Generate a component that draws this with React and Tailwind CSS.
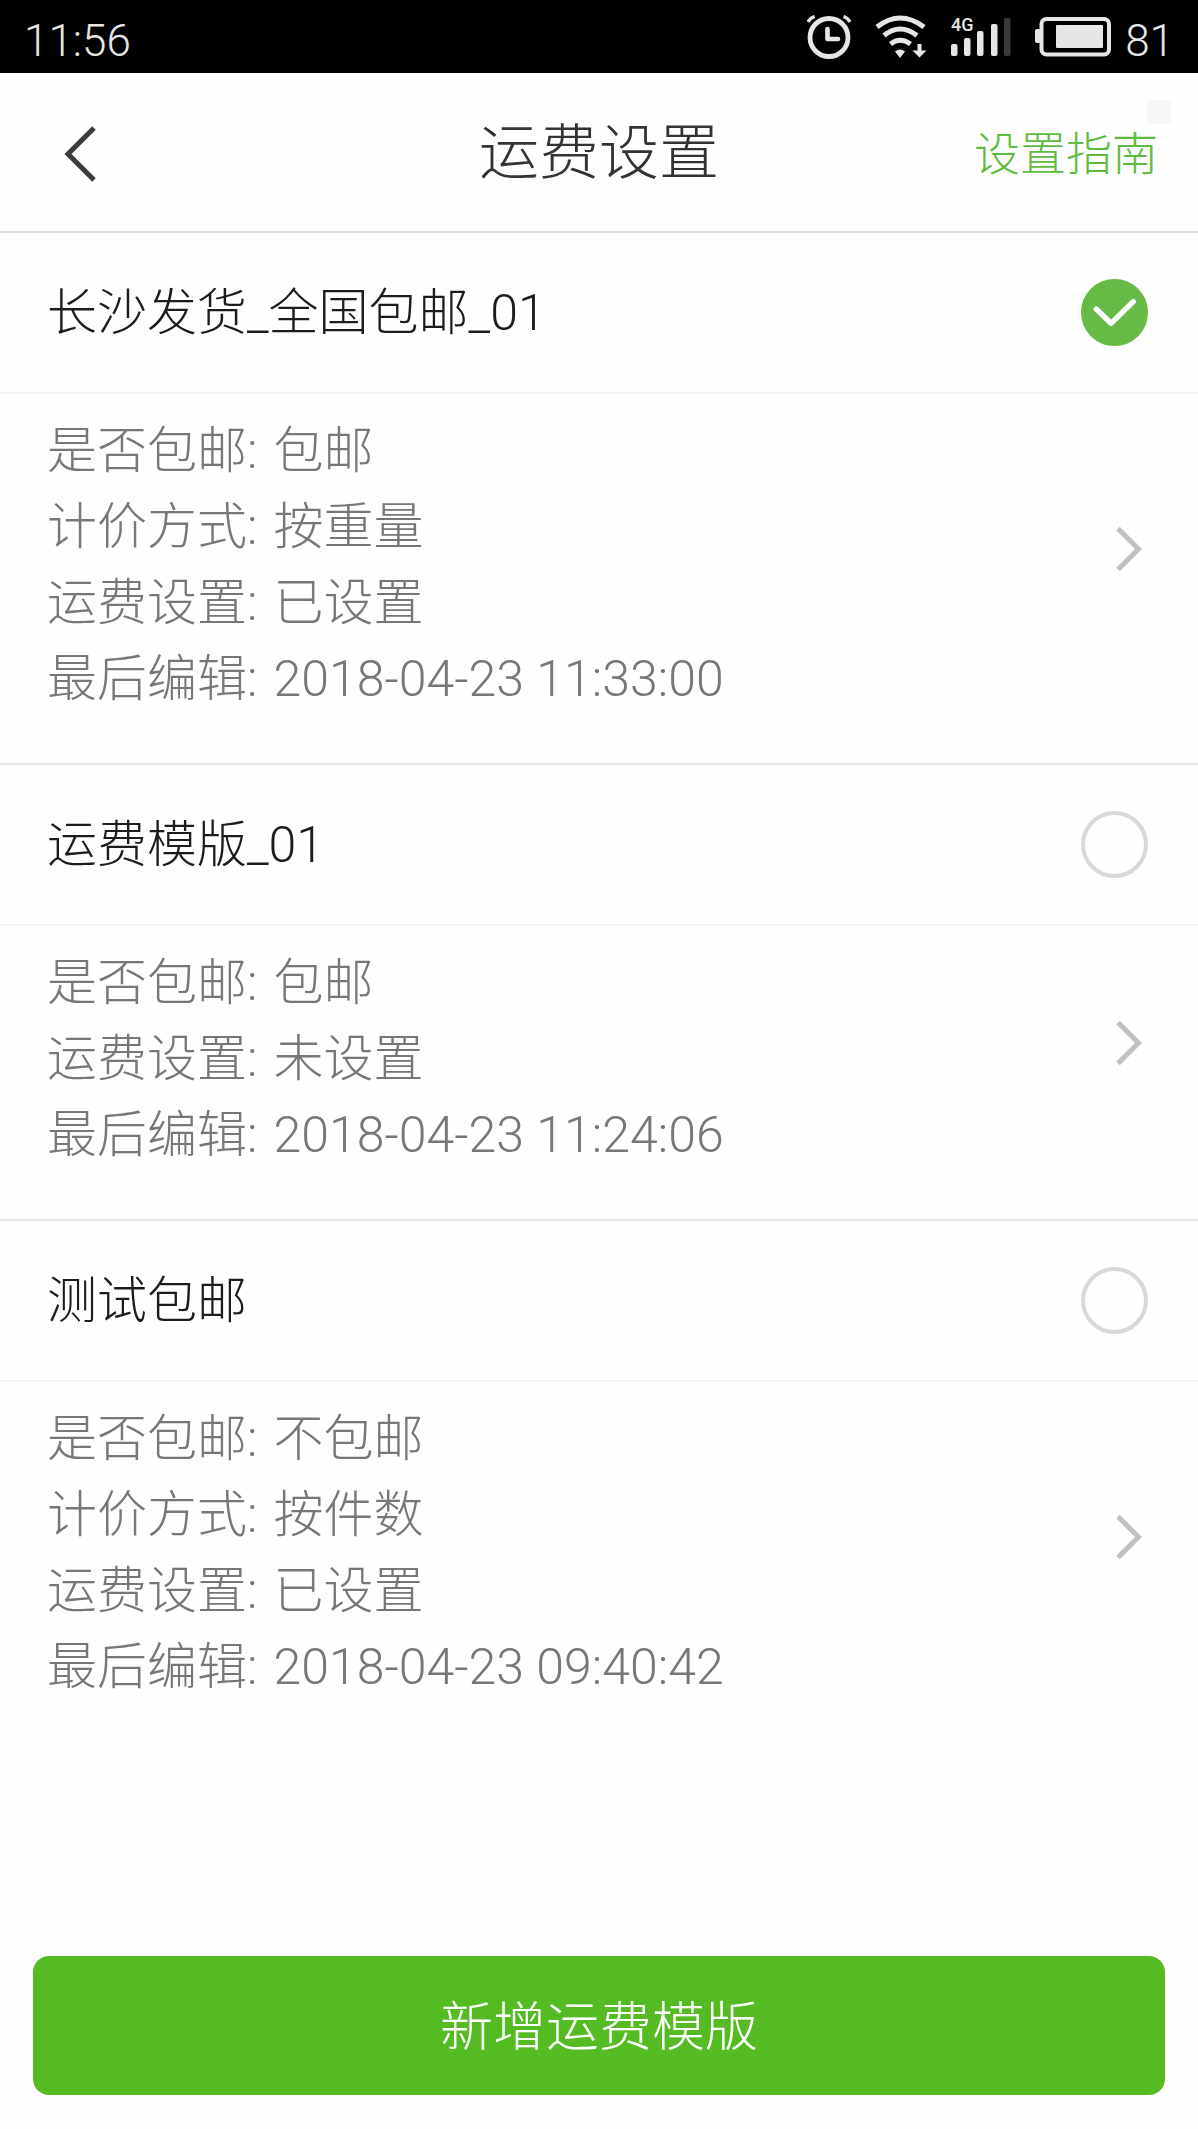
import React, { useState } from 'react';

const templates = [
  {
    id: 'cs01',
    name: '长沙发货_全国包邮_01',
    rows: [
      ['是否包邮', '包邮'],
      ['计价方式', '按重量'],
      ['运费设置', '已设置'],
      ['最后编辑', '2018-04-23 11:33:00'],
    ],
  },
  {
    id: 'yf01',
    name: '运费模版_01',
    rows: [
      ['是否包邮', '包邮'],
      ['运费设置', '未设置'],
      ['最后编辑', '2018-04-23 11:24:06'],
    ],
  },
  {
    id: 'test',
    name: '测试包邮',
    rows: [
      ['是否包邮', '不包邮'],
      ['计价方式', '按件数'],
      ['运费设置', '已设置'],
      ['最后编辑', '2018-04-23 09:40:42'],
    ],
  },
];

function AlarmIcon() {
  return (
    <svg className="w-11 h-11" viewBox="0 0 44 44" fill="none" stroke="#e6e6e6">
      <circle cx="22" cy="22.5" r="19" strokeWidth="4.8" />
      <path d="M20.5 14v10h10.500" strokeWidth="4.6" strokeLinecap="round" strokeLinejoin="round" />
      <path d="M1 7Q3 3 7.500 1.500M36.500 1.500Q41 3 43 7" strokeWidth="3.400" />
    </svg>
  );
}

function WifiIcon() {
  return (
    <svg className="w-[52px] h-11" viewBox="0 0 52 44" fill="none" stroke="#e6e6e6" strokeWidth="5">
      <path d="M2 12Q25 -6 49 12" />
      <path d="M9 20.500Q25 7.500 42 20.500" />
      <path d="M15.500 29Q25 21.500 35.500 29" />
      <path d="M20 36.500Q25 32.500 30 36.500L25 43Z" fill="#e6e6e6" stroke="none" />
      <path d="M44.500 29v8" strokeWidth="4" />
      <path d="M37.500 35.500h14L44.500 42.500Z" fill="#e6e6e6" stroke="none" />
    </svg>
  );
}

function SignalIcon() {
  return (
    <svg className="w-16 h-14" viewBox="-2 -9 64 56" fill="#e6e6e6">
      <text x="0" y="13" fontSize="18" fontWeight="500" fontFamily="Roboto, sans-serif">4G</text>
      <rect x="0" y="26" width="6.500" height="12" rx="2" />
      <rect x="13" y="20" width="6.500" height="18" rx="2" />
      <rect x="26" y="13" width="6.500" height="25" rx="2" />
      <rect x="40" y="6" width="6.500" height="32" rx="2" />
      <rect x="53" y="0" width="6.500" height="38" rx="2" fill="#3a3a3a" />
    </svg>
  );
}

function BatteryIcon() {
  return (
    <svg className="w-[76px] h-10" viewBox="0 0 76 40" fill="none">
      <rect x="6.500" y="2" width="67.500" height="35.500" rx="5" stroke="#e6e6e6" strokeWidth="4" />
      <rect x="0" y="12" width="6" height="14" rx="2" fill="#e6e6e6" />
      <rect x="21" y="8" width="47" height="23" rx="1" fill="#e6e6e6" />
    </svg>
  );
}

function StatusBar() {
  return (
    <div className="h-[73px] bg-black text-[#e6e6e6] text-[44px] leading-none px-6 flex items-center justify-between">
      <span className="pt-2">11:56</span>
      <div className="flex items-center">
        <AlarmIcon />
        <span className="ml-6"><WifiIcon /></span>
        <span className="ml-[22px]"><SignalIcon /></span>
        <span className="ml-[22px]"><BatteryIcon /></span>
        <span className="ml-[14px] pt-2">81</span>
      </div>
    </div>
  );
}

function Header() {
  return (
    <header className="relative h-[160px] border-b-2 border-[#dedede] px-10 pt-1 grid grid-cols-[1fr_auto_1fr] items-center">
      <button className="justify-self-start pl-6 pr-4" aria-label="返回">
        <svg className="w-8 h-14" viewBox="0 0 32 56" fill="none" stroke="#3c3c3c" strokeWidth="5">
          <path d="M30 2L4 28L30 54" />
        </svg>
      </button>
      <h1 className="text-[60px] leading-[80px] text-[#333]">运费设置</h1>
      <a href="#guide" className="justify-self-end text-[46px] leading-[60px] text-[#5fbb3f]">设置指南</a>
      <span className="absolute right-[27px] top-[27px] w-6 h-6 bg-[#f7f7f7]" />
    </header>
  );
}

function TemplateItem({ template, checked, onSelect }) {
  return (
    <section className="border-b-2 border-[#e6e6e6] last:border-b-0">
      <div className="h-[161px] pl-[47px] pr-[50px] border-b-2 border-[#f3f3f3] flex items-center justify-between">
        <label htmlFor={template.id} className="text-[50px] leading-[76px] text-[#1c1c1c]">
          {template.name}
        </label>
        <span className="grid">
          <input
            type="radio"
            id={template.id}
            name="template"
            checked={checked}
            onChange={onSelect}
            className="col-start-1 row-start-1 appearance-none w-[67px] h-[67px] rounded-full border-4 border-[#d8d8d8] checked:border-[#66bb46] checked:bg-[#66bb46]"
          />
          {checked && (
            <svg className="col-start-1 row-start-1 w-[67px] h-[67px] pointer-events-none" viewBox="0 0 68 68" fill="none" stroke="white" strokeWidth="5.500" strokeLinecap="round" strokeLinejoin="round">
              <path d="M15.500 30.500L30.500 45L53 23" />
            </svg>
          )}
        </span>
      </div>
      <a href={`#${template.id}`} className="pl-[47px] pr-[50px] pt-[19px] pb-[46px] flex items-center justify-between">
        <div className="text-[50px] leading-[76px] text-[#777]">
          {template.rows.map(([label, value]) => (
            <p key={label} className="flex gap-4">
              <span>{label}:</span>
              <span>{value}</span>
            </p>
          ))}
        </div>
        <svg className="w-8 h-11 mb-8" viewBox="0 0 32 44" fill="none" stroke="#c0c0c0" strokeWidth="5">
          <path d="M2 1.500L22.500 22L2 42.500" />
        </svg>
      </a>
    </section>
  );
}

export default function App() {
  const [selected, setSelected] = useState('cs01');

  return (
    <div className="min-h-screen bg-[#fefefe] flex flex-col font-light font-[Roboto,'Noto_Sans_CJK_SC',sans-serif]">
      <StatusBar />
      <Header />
      <main>
        {templates.map((template) => (
          <TemplateItem
            key={template.id}
            template={template}
            checked={template.id === selected}
            onSelect={() => setSelected(template.id)}
          />
        ))}
      </main>
      <div className="mt-auto px-[33px] pb-[34px]">
        <button className="w-full h-[139px] pt-1 rounded-2xl bg-[#55bb22] text-white text-[53px] leading-[76px]">
          新增运费模版
        </button>
      </div>
    </div>
  );
}
